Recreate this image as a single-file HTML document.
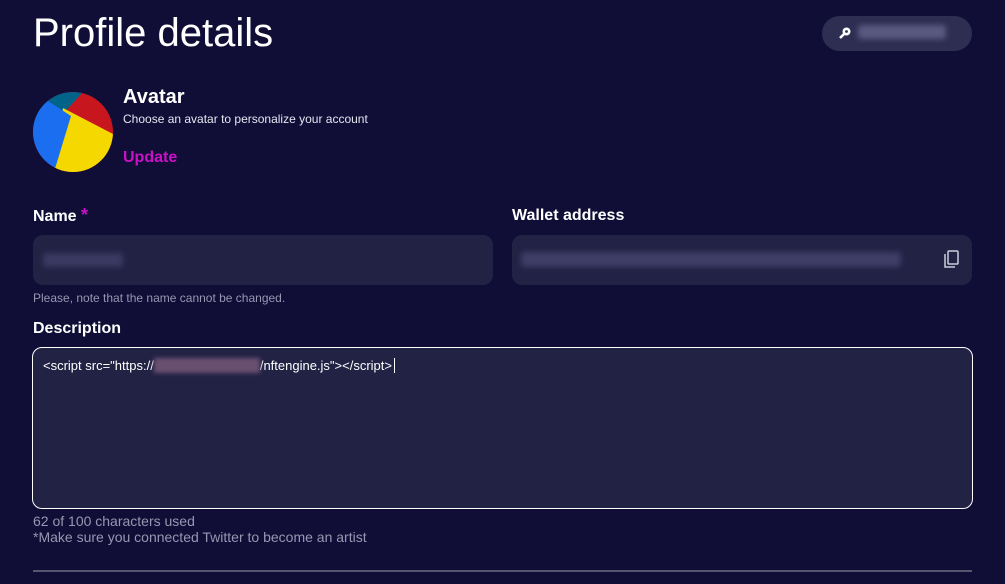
<!DOCTYPE html>
<html><head><style>
body{margin:0;width:1005px;height:584px;background:#100e37;font-family:"Liberation Sans",sans-serif;color:#fff;position:relative;overflow:hidden}
.a{position:absolute}
.inp{position:absolute;background:#222245;border-radius:10px}
.blur{position:absolute;background:#44446a;filter:blur(3px);border-radius:3px}
</style></head><body>
<div class="a" style="left:33px;top:9px;font-size:40px;line-height:48px">Profile details</div>
<div class="a" style="left:822px;top:16px;width:150px;height:35px;border-radius:18px;background:#2e2d52"></div>
<svg class="a" style="left:838px;top:26px" width="14" height="14" viewBox="0 0 14 14"><circle cx="8.5" cy="5.5" r="4" fill="#fff"/><circle cx="8.5" cy="5.5" r="1.4" fill="#2e2d52"/><path d="M6 8 L2 12" stroke="#fff" stroke-width="2.6"/></svg>
<div class="blur" style="left:858px;top:25px;width:88px;height:14px;background:#5a5980"></div>
<svg class="a" style="left:33px;top:92px" width="80" height="80" viewBox="0 0 80 80"><defs><clipPath id="c"><circle cx="40" cy="40" r="40"/></clipPath></defs><g clip-path="url(#c)"><rect width="80" height="80" fill="#c8161e"/><polygon points="0,0 40,0 28,24 0,35" fill="#00648a"/><polygon points="40,0 80,0 80,5 62,0 50,0 28,24" fill="#00648a"/><polygon points="30,16 80,42 80,60 60,80 20,80" fill="#f4d800"/><polygon points="0,20 15,9 38,24 21,80 0,80" fill="#1b6ef0"/></g></svg>
<div class="a" style="left:123px;top:86px;font-size:20px;font-weight:bold">Avatar</div>
<div class="a" style="left:123px;top:112px;font-size:12px;color:#e6e6f0">Choose an avatar to personalize your account</div>
<div class="a" style="left:123px;top:149px;font-size:16px;font-weight:bold;color:#cc10c8">Update</div>
<div class="a" style="left:33px;top:205px;font-size:16px;font-weight:bold">Name <span style="color:#cc10c8;font-size:18px">*</span></div>
<div class="a" style="left:512px;top:207px;font-size:16px;font-weight:bold">Wallet address</div>
<div class="inp" style="left:33px;top:235px;width:460px;height:50px"></div>
<div class="blur" style="left:43px;top:253px;width:80px;height:14px;background:#3a3a62"></div>
<div class="inp" style="left:512px;top:235px;width:460px;height:50px"></div>
<div class="blur" style="left:521px;top:252px;width:380px;height:15px;background:#3e3e66"></div>
<svg class="a" style="left:943px;top:250px" width="17" height="19" viewBox="0 0 17 19" fill="none" stroke="#ccccdd" stroke-width="1.5"><rect x="5" y="1" width="10" height="13" rx="1"/><path d="M2 4v13h10"/></svg>
<div class="a" style="left:33px;top:291px;font-size:12px;color:#9896b0">Please, note that the name cannot be changed.</div>
<div class="a" style="left:33px;top:320px;font-size:16px;font-weight:bold">Description</div>
<div class="a" style="left:32px;top:347px;width:939px;height:160px;background:#222245;border:1px solid #fff;border-radius:10px"></div>
<div class="a" style="left:43px;top:358px;font-size:13px">&lt;script src="https://<span style="display:inline-block;width:106px;height:15px;background:#6a5070;filter:blur(2px);vertical-align:-3px"></span>/nftengine.js"&gt;&lt;/script&gt;<span style="border-left:1px solid #fff;margin-left:2px"></span></div>
<div class="a" style="left:33px;top:513px;font-size:14px;color:#9896b0;line-height:16px">62 of 100 characters used<br>*Make sure you connected Twitter to become an artist</div>
<div class="a" style="left:33px;top:570px;width:939px;height:2px;background:#56556f"></div>
</body></html>
